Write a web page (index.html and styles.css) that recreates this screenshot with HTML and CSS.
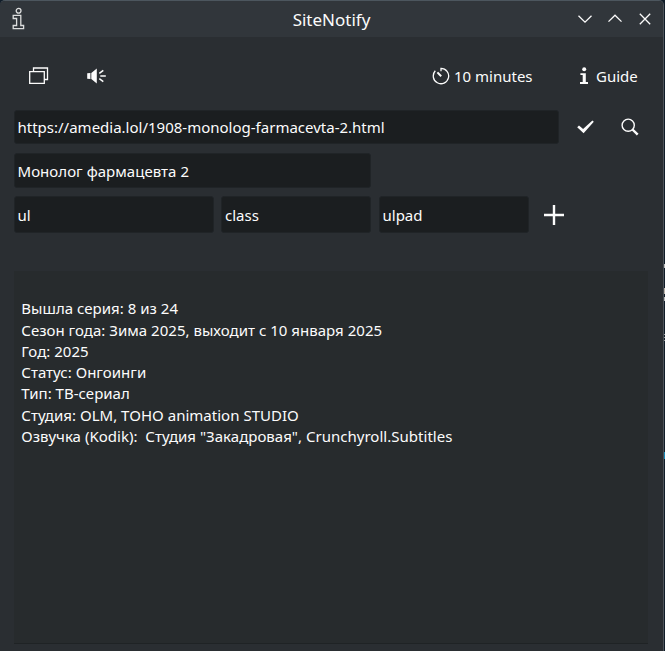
FILE: index.html
```
<!DOCTYPE html>
<html lang="ru">
<head>
<meta charset="utf-8">
<title>SiteNotify</title>
<link rel="stylesheet" href="styles.css">
</head>
<body>
<div class="window">
  <header class="titlebar">
    <svg class="app-icon" width="14" height="24" viewBox="0 0 14 24"><circle cx="6.6" cy="3.8" r="2.4"/><path d="M1.2 8.3h7.6v10.2h2.8v3.2H1.2v-3.2h3.4v-7H1.2z"/></svg>
    <h1 class="title">SiteNotify</h1>
    <div class="controls">
      <svg width="14" height="14" viewBox="0 0 14 14"><path d="M.5 3.8 7 10.2l6.5-6.4"/></svg>
      <svg width="14" height="14" viewBox="0 0 14 14"><path d="M.5 9.6 7 3.2l6.5 6.4"/></svg>
      <svg width="14" height="14" viewBox="0 0 14 14"><path d="m1.8 1.8 10.4 10.4m0-10.4L1.8 12.2"/></svg>
    </div>
  </header>
  <nav class="toolbar">
    <svg class="windows-icon" width="20" height="18" viewBox="0 0 20 18"><path d="M4.5 4V1h14v11.5h-3M.7 4.6h14.6V16.3H.7z"/></svg>
    <svg class="sound-icon" width="20" height="16" viewBox="0 0 20 16"><path class="solid" d="M.2 5.2 3.4 5v6L.2 10.8zM4.3 5 9.8.6v14.8L4.3 11z"/><path d="m12.3 5.3 4-3M13.3 8h5.5M12.3 10.7l4 3"/></svg>
    <div class="interval"><svg width="18" height="18" viewBox="0 0 18 18"><path d="M9 4.2V1.3A7.7 7.7 0 1 1 3.3 3.8"/><path class="hand" d="m5.4 5.4 3.8 3.8"/></svg><span>10 minutes</span></div>
    <div class="guide"><svg width="8" height="18" viewBox="0 0 8 18"><circle cx="4.2" cy="2.2" r="2"/><path d="M.4 6.2h5.4v8.9H8V17H0v-1.9h2.7V8H.4z"/></svg><span>Guide</span></div>
  </nav>
  <main class="form">
    <div class="row url-row">
      <div class="field url">https://amedia.lol/1908-monolog-farmacevta-2.html</div>
      <svg class="check" width="18" height="14" viewBox="0 0 18 14"><path d="M.2 7.2 2 5.4 6.1 8.9 15.4.5l1.4 1.2L6.6 13.2z"/></svg>
      <svg class="search" width="18" height="18" viewBox="0 0 18 18"><circle cx="7.2" cy="7.2" r="6.1"/><path d="m11.5 11.5 5.2 5.2"/></svg>
    </div>
    <div class="row name-row"><div class="field name">Монолог фармацевта 2</div></div>
    <div class="row tag-row">
      <div class="field tag">ul</div>
      <div class="field attr">class</div>
      <div class="field value">ulpad</div>
      <svg class="plus" width="20" height="20" viewBox="0 0 20 20"><path d="M10 0v20M0 10h20"/></svg>
    </div>
    <section class="output">
      <p>Вышла серия: 8 из 24</p>
      <p>Сезон года: Зима 2025, выходит с 10 января 2025</p>
      <p>Год: 2025</p>
      <p>Статус: Онгоинги</p>
      <p>Тип: ТВ-сериал</p>
      <p>Студия: OLM, TOHO animation STUDIO</p>
      <p>Озвучка (Kodik):&nbsp; Студия "Закадровая", Crunchyroll.Subtitles</p>
    </section>
  </main>
</div>
<div class="desktop-edge"><i class="mark m1"></i><i class="mark m2"></i><i class="mark m3"></i><i class="mark m4"></i><i class="mark m5"></i></div>
</body>
</html>
```
FILE: styles.css
```
* { box-sizing: border-box; }
body {
  margin: 0;
  height: 651px;
  display: flex;
  overflow: hidden;
  background: #101c28;
  color: #fcfcfc;
  font: 15px/20px "Noto Sans", sans-serif;
}
svg { display: block; flex: none; fill: none; stroke: #fcfcfc; }
.window {
  width: 664px;
  height: 651px;
  flex: none;
  background: #2a2e32;
  border-top: 1px solid #4c565e;
  border-right: 1px solid #4c5258;
  border-radius: 5px 5px 0 0;
  overflow: hidden;
}
.titlebar {
  height: 36px;
  display: grid;
  grid-template-columns: 85px 1fr 85px;
  background: #31363b;
}
.app-icon { margin: 6px 0 0 12px; stroke: #dcdddd; stroke-width: 1.3; }
.title {
  margin: 0;
  padding: 9px 0 0 0;
  text-align: center;
  font-size: 17px;
  line-height: 20px;
  font-weight: 400;
}
.controls { display: flex; gap: 16px; padding-top: 11px; stroke-width: 1.3; }
.toolbar { height: 73px; display: flex; align-items: flex-start; padding-left: 29px; }
.windows-icon { margin-top: 30px; stroke-width: 1.3; }
.sound-icon { margin: 31px 0 0 38px; stroke-width: 1.5; }
.solid { fill: #fcfcfc; stroke: none; }
.interval { display: flex; gap: 4px; margin: 29px 0 0 325px; width: 148px; }
.interval svg { margin-top: 1px; stroke-width: 1.3; }
.interval .hand { stroke-width: 2; }
.guide { display: flex; gap: 8px; margin-top: 29px; }
.guide svg { margin-top: 1px; fill: #fcfcfc; stroke: none; }
.form { padding-left: 14px; }
.row { display: flex; }
.field {
  flex: none;
  padding-left: 2.5px;
  background: #1b1e20;
  border: 1px solid #202427;
  border-radius: 3px;
  white-space: pre;
}
.url { width: 545px; height: 34px; line-height: 33px; }
.check { margin: 10px 0 0 18px; fill: #fcfcfc; stroke: none; }
.search { margin: 8px 0 0 26px; stroke-width: 1.4; }
.search path { stroke-width: 2.4; }
.name-row { margin-top: 9px; }
.name { width: 357px; height: 35px; line-height: 34px; letter-spacing: .04px; }
.tag-row { margin-top: 8px; }
.tag, .attr, .value { height: 37px; line-height: 36px; }
.tag { width: 200px; }
.attr { width: 150px; margin-left: 7px; padding-left: 3px; }
.value { width: 150px; margin-left: 8px; }
.plus { margin: 9px 0 0 15px; stroke-width: 2.4; }
.output {
  width: 634px;
  height: 373px;
  margin-top: 38px;
  padding: 27.4px 7.3px 0;
  background: #272b2d;
  border-bottom: 1px solid #1f2325;
}
.output p { margin: 0; line-height: 21.25px; letter-spacing: .02px; white-space: pre; }
.desktop-edge { width: 1px; height: 651px; position: relative; }
.mark { position: absolute; left: 0; width: 1px; }
.m1 { top: 264px; height: 4px; background: #b8b8b8; }
.m2 { top: 288px; height: 6px; background: #b8b0a8; }
.m3 { top: 297px; height: 4px; background: #b8b8b8; }
.m4 { top: 334px; height: 7px; background: repeating-linear-gradient(#999 0 1px, #101c28 1px 3px); }
.m5 { top: 452px; height: 7px; background: #1588b8; }
```
